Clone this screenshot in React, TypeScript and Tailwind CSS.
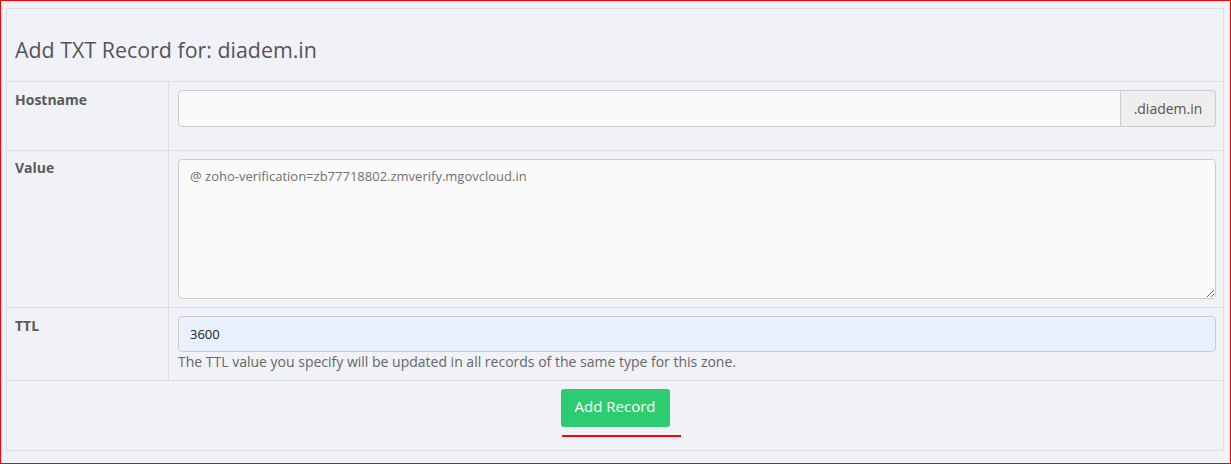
export default function App() {
  return (
    <div className="w-[1231px] h-[464px] border border-[#ff0000] bg-[#f1f2f7] overflow-hidden" style={{ fontFamily: '"Open Sans", "Noto Sans", sans-serif' }}>
      <div className="ml-[5px] mt-[7px] w-[1218px] h-[443px] border border-[#dcdde0] bg-[#f1f2f7] flex flex-col">
        <div className="h-[73px] border-b border-[#dcdde0] px-[8px] pt-[26px]">
          <h2 className="text-[21.4px] leading-[30px] text-[#555]">Add TXT Record for: diadem.in</h2>
        </div>

        <div className="flex h-[69px] border-b border-[#dcdde0]">
          <div className="w-[162px] shrink-0 border-r border-[#dcdde0] px-[8px] pt-[8px] text-[14px] leading-[20px] font-bold text-[#5a5a5a]">Hostname</div>
          <div className="flex-1 pl-[9px] pr-[7px] pt-[8px]">
            <div className="flex h-[37px]">
              <input className="flex-1 h-full rounded-l-[4px] border border-[#ccc] bg-[#fafafa] px-3 text-[13px] outline-none" />
              <span className="w-[95px] h-full flex items-center justify-center rounded-r-[4px] border border-l-0 border-[#ccc] bg-[#eeeeee] text-[14px] text-[#555]">.diadem.in</span>
            </div>
          </div>
        </div>

        <div className="flex h-[157px] border-b border-[#dcdde0]">
          <div className="w-[162px] shrink-0 border-r border-[#dcdde0] px-[8px] pt-[7px] text-[14px] leading-[20px] font-bold text-[#5a5a5a]">Value</div>
          <div className="flex-1 pl-[9px] pr-[7px] pt-[8px]">
            <textarea
              className="block w-full h-[140px] rounded-[4px] border border-[#ccc] bg-[#fafafa] px-[11px] py-[7px] text-[13px] leading-[18px] text-[#707070] outline-none"
              defaultValue="@ zoho-verification=zb77718802.zmverify.mgovcloud.in"
            />
          </div>
        </div>

        <div className="flex h-[73px] border-b border-[#dcdde0]">
          <div className="w-[162px] shrink-0 border-r border-[#dcdde0] px-[8px] pt-[8px] text-[14px] leading-[20px] font-bold text-[#5a5a5a]">TTL</div>
          <div className="flex-1 pl-[9px] pr-[7px] pt-[8px]">
            <input
              className="block w-full h-[36px] rounded-[4px] border border-[#ccc] bg-[#e8f0fe] px-[11px] text-[13px] text-[#222] outline-none"
              defaultValue="3600"
            />
            <p className="text-[14px] leading-[20px] text-[#666]">The TTL value you specify will be updated in all records of the same type for this zone.</p>
          </div>
        </div>

        <div className="flex flex-col items-center pt-[8px]">
          <button className="h-[38px] w-[109px] rounded-[3px] bg-[#2ecc71] pb-[3px] text-[15px] text-white">Add Record</button>
          <div className="mt-[8px] ml-[12px] h-[2px] w-[119px] bg-[#ff0000]" />
        </div>
      </div>
    </div>
  );
}
